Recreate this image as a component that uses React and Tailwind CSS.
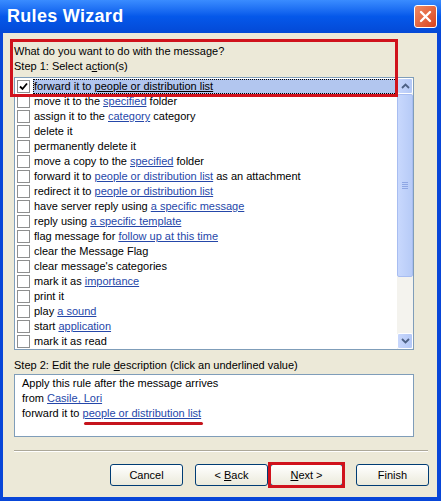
const font = { fontFamily: '"Liberation Sans", Arial, sans-serif' }

const actions = [
  ['forward it to ', 'people or distribution list', ''],
  ['move it to the ', 'specified', ' folder'],
  ['assign it to the ', 'category', ' category'],
  ['delete it'],
  ['permanently delete it'],
  ['move a copy to the ', 'specified', ' folder'],
  ['forward it to ', 'people or distribution list', ' as an attachment'],
  ['redirect it to ', 'people or distribution list', ''],
  ['have server reply using ', 'a specific message', ''],
  ['reply using ', 'a specific template', ''],
  ['flag message for ', 'follow up at this time', ''],
  ['clear the Message Flag'],
  ["clear message's categories"],
  ['mark it as ', 'importance', ''],
  ['print it'],
  ['play ', 'a sound', ''],
  ['start ', 'application', ''],
  ['mark it as read'],
]

function Checkbox({ checked }) {
  return (
    <span className="w-[13px] h-[13px] shrink-0 bg-white border border-[#8e8f8f] flex items-center justify-center">
      {checked && (
        <svg width="9" height="9" viewBox="0 0 9 9">
          <path d="M1 4.5 L3.5 7 L8 1.5" fill="none" stroke="#000" strokeWidth="1.8" />
        </svg>
      )}
    </span>
  )
}

function ActionRow({ parts, selected }) {
  const [pre, link, post] = parts
  return (
    <div className="h-[15px] flex items-center pl-[2px]">
      <Checkbox checked={selected} />
      <span className={
        'ml-[3px] h-[15px] flex-1 block leading-[15px] pl-[1px] whitespace-pre ' +
        (selected ? 'bg-[#b2c6ef] outline outline-1 outline-dotted outline-black -outline-offset-1' : '')
      }>
        {pre}
        {link && <span className={'underline ' + (selected ? 'text-black' : 'text-[#2547a9]')}>{link}</span>}
        {post}
      </span>
    </div>
  )
}

function Chevron({ up }) {
  return (
    <svg width="9" height="6" viewBox="0 0 9 6">
      <path d={up ? 'M1 5 L4.5 1.5 L8 5' : 'M1 1 L4.5 4.5 L8 1'} fill="none" stroke="#4d6185" strokeWidth="1.8" />
    </svg>
  )
}

function Scrollbar() {
  return (
    <div className="w-[16px] shrink-0 bg-[#f4f3ee] flex flex-col">
      <div className="h-[16px] rounded-[2px] border border-white bg-gradient-to-r from-[#c8d7fc] to-[#b4c8f6] flex items-center justify-center">
        <Chevron up />
      </div>
      <div className="h-[183px] rounded-[2px] border border-[#a8bdf1] bg-gradient-to-r from-[#c8d8fd] to-[#b7cbf7] flex items-center justify-center">
        <div className="flex flex-col gap-[1px]">
          <div className="w-[6px] h-[1px] bg-[#8ea6e4]" />
          <div className="w-[6px] h-[1px] bg-[#8ea6e4]" />
          <div className="w-[6px] h-[1px] bg-[#8ea6e4]" />
          <div className="w-[6px] h-[1px] bg-[#8ea6e4]" />
        </div>
      </div>
      <div className="flex-1" />
      <div className="h-[16px] rounded-[2px] border border-white bg-gradient-to-r from-[#c8d7fc] to-[#b4c8f6] flex items-center justify-center">
        <Chevron />
      </div>
    </div>
  )
}

function Button({ children }) {
  return (
    <button className="w-[73px] h-[22px] rounded-[3px] border border-[#003c74] bg-gradient-to-b from-white to-[#ebeadb] text-[11px] text-black">
      {children}
    </button>
  )
}

export default function App() {
  return (
    <div style={font} className="w-[441px] h-[501px] flex flex-col bg-[#0846d8] text-[11px] text-black overflow-hidden">
      <div className="h-[33px] shrink-0 flex items-center justify-between pl-[7px] pr-[4px] bg-gradient-to-b from-[#3a8cff] via-[#0558ea] to-[#0449d6]">
        <span className="text-white font-bold text-[18px] tracking-[0.3px]">Rules Wizard</span>
        <div className="w-[23px] h-[23px] rounded-[3px] border border-white bg-gradient-to-br from-[#f08a63] to-[#d8411a] flex items-center justify-center">
          <svg width="13" height="13" viewBox="0 0 13 13">
            <path d="M2 2 L11 11 M11 2 L2 11" stroke="#fff" strokeWidth="2.4" strokeLinecap="round" />
          </svg>
        </div>
      </div>

      <div className="flex-1 ml-[3px] mr-[4px] mb-[4px] bg-[#ece9d8] relative pl-[11px] pr-[23px] pt-[11px] flex flex-col">
        <div className="h-[15px] leading-[15px]">What do you want to do with the message?</div>
        <div className="h-[15px] leading-[15px]">Step 1: Select a<span className="underline">c</span>tion(s)</div>

        <div className="mt-[3px] h-[273px] border border-[#7f9db9] bg-white flex">
          <div className="flex-1 pt-[1px]">
            {actions.map((a, i) => (
              <ActionRow key={i} parts={a} selected={i === 0} />
            ))}
          </div>
          <Scrollbar />
        </div>

        <div className="mt-[8px] h-[15px] leading-[15px]">Step 2: Edit the rule <span className="underline">d</span>escription (click an underlined value)</div>
        <div className="mt-[1px] h-[63px] border border-[#7f9db9] bg-white pl-[7px] pt-[1px] leading-[15px]">
          <div>Apply this rule after the message arrives</div>
          <div>from <span className="underline text-[#2547a9]">Casile, Lori</span></div>
          <div>
            forward it to{' '}
            <span className="relative underline text-[#2547a9]">
              people or distribution list
              <span className="absolute left-[1px] right-[-2px] bottom-[-6px] h-[3px] rounded-full bg-[#c5141c]" />
            </span>
          </div>
        </div>

        <div className="mt-[13px] mr-[-14px] border-t border-[#aca899] border-b border-b-white" />

        <div className="mt-[12px] mr-[-15px] flex justify-end items-center">
          <Button>Cancel</Button>
          <div className="ml-[12px]"><Button>&lt; <span className="underline">B</span>ack</Button></div>
          <div className="ml-[2px] relative">
            <Button><span className="underline">N</span>ext &gt;</Button>
            <div className="absolute -inset-[2px] border-[3px] border-[#d0121c] pointer-events-none" />
          </div>
          <div className="ml-[13px]"><Button>Finish</Button></div>
        </div>

        <div className="absolute left-[7px] top-[6px] w-[388px] h-[58px] border-[3px] border-[#d0121c] pointer-events-none" />
      </div>
    </div>
  )
}
